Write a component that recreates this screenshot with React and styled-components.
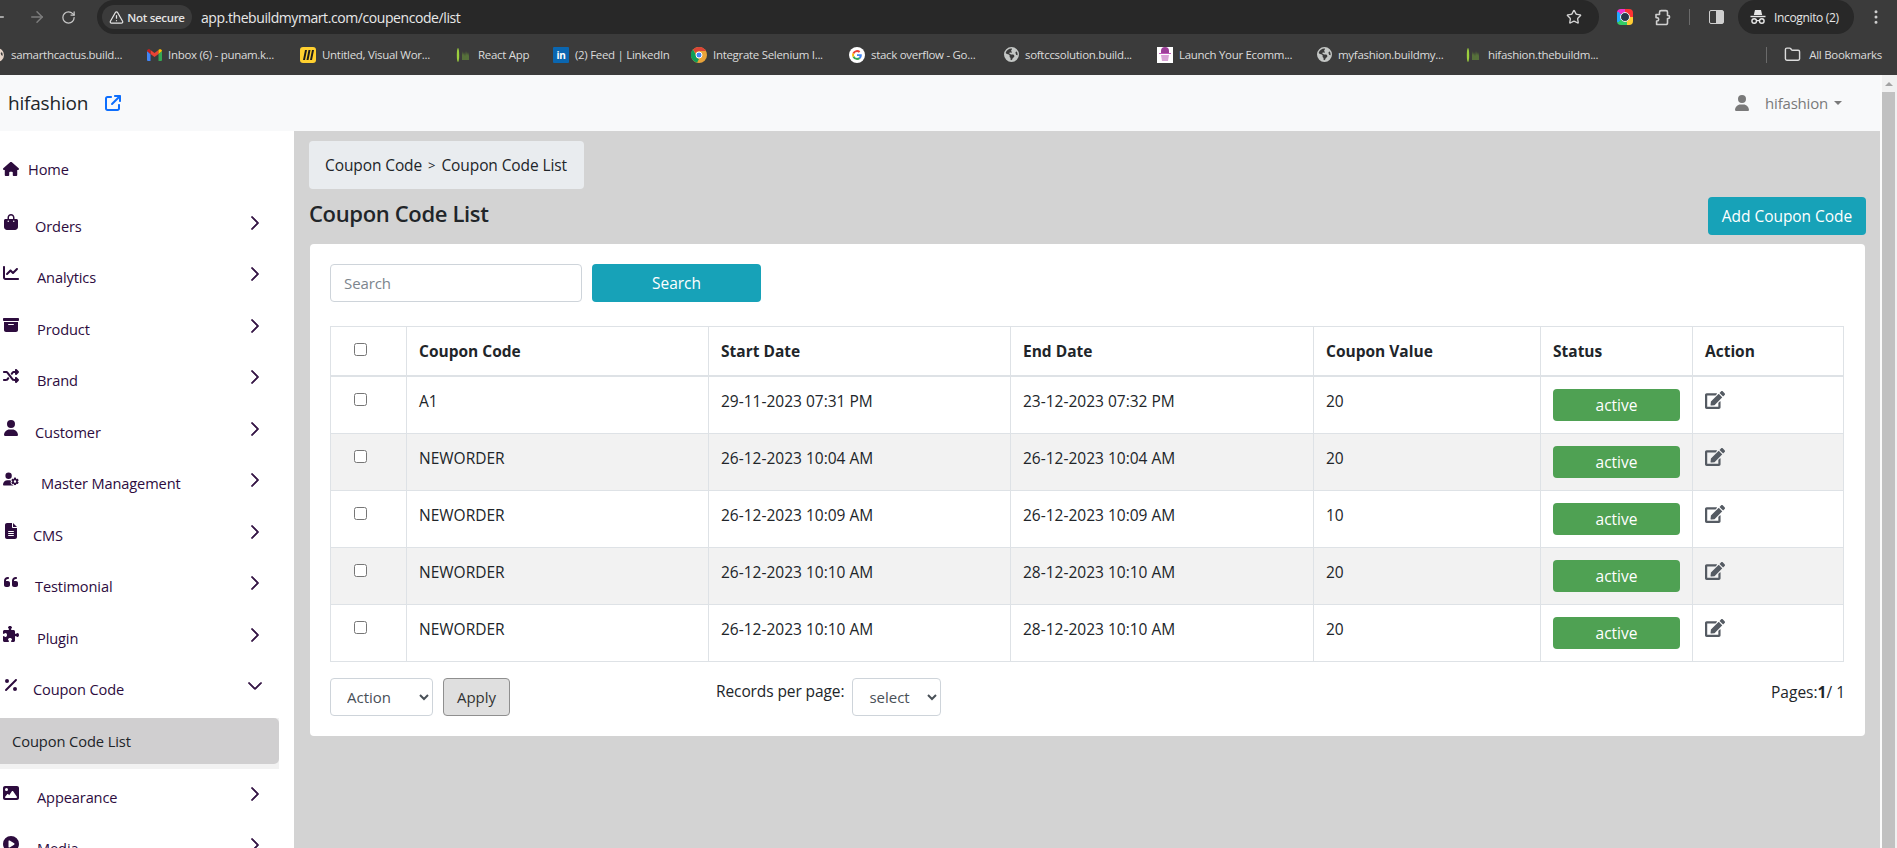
import React from "react";
import styled, { createGlobalStyle } from "styled-components";
import {
  FaHouse, FaBagShopping, FaChartLine, FaBoxArchive, FaShuffle, FaUser, FaUserGear, FaFileLines,
  FaQuoteLeft, FaPuzzlePiece, FaPercent, FaImage, FaCirclePlay, FaEarthAmericas,
  FaArrowUpRightFromSquare,
} from "react-icons/fa6";
import { FaEdit } from "react-icons/fa";
import { BsChevronRight, BsChevronDown } from "react-icons/bs";
import { ArrowLeft, ArrowRight, RotateCw, Star, Folder, EllipsisVertical, TriangleAlert } from "lucide-react";

const FONT = `"Open Sans", "Noto Sans", sans-serif`;

const Global = createGlobalStyle`
  html, body { margin: 0; padding: 0; height: 100%; overflow: hidden; }
  body { font-family: ${FONT}; background: #d3d3d3; }
  * { box-sizing: border-box; }
  svg { flex: none; }
`;

const Page = styled.div`
  width: 1897px; height: 848px; display: flex; flex-direction: column; overflow: hidden;
`;
const TopBar = styled.div`
  height: 34px; background: #3b3b3b; display: flex; align-items: center; color: #c7c7c7; flex: none;
`;
const NavIcons = styled.div`
  width: 97px; flex: none; display: flex; align-items: center; gap: 15px; margin-left: -11px;
`;
const Omnibox = styled.div`
  width: 1502px; margin-left: 11px; height: 34px; background: #282828; border-radius: 17px; display: flex;
  align-items: center; padding-left: 5px; flex: none; position: relative;
`;
const SecureChip = styled.div`
  width: 90px; height: 24px; border-radius: 12px; background: #3b3b3b; display: flex; align-items: center;
  justify-content: center; gap: 3px; font: 600 11.5px ${FONT}; color: #e4e4e4; letter-spacing: -0.3px; flex: none;
`;
const Url = styled.span`
  margin-left: 9px; font: 400 14px ${FONT}; color: #e8e8e8; letter-spacing: -0.42px; white-space: nowrap;
`;
const StarSlot = styled.span`
  margin-left: auto; margin-right: 17px; display: flex; color: #d4d4d4;
`;
const ChromeTools = styled.div`
  flex: 1; display: flex; align-items: center; position: relative; min-width: 0;
`;
const ColorExt = styled.span`
  width: 16px; height: 16px; margin-left: 18px; border-radius: 4px; flex: none; display: block;
  background: conic-gradient(#f33 0 25%, #fc3 25% 45%, #3c6 45% 65%, #2af 65% 85%, #e3c 85%);
  position: relative;
  &::after { content: ""; position: absolute; inset: 3px; border-radius: 50%; background: #27384a; border: 1.5px solid #eee; }
`;
const ToolSlot = styled.span`
  display: flex; margin-left: ${(p) => p.$ml}px; color: #cfcfcf;
`;
const ToolSep = styled.span`
  width: 1px; height: 16px; background: #6a6a6a; margin-left: 18px; flex: none;
`;
const SidePanelIcon = styled.span`
  width: 15px; height: 14px; margin-left: 19px; border: 1.5px solid #cfcfcf; border-radius: 2px; flex: none;
  background: linear-gradient(90deg, transparent 50%, #cfcfcf 50%);
`;
const IncognitoPill = styled.div`
  width: 116px; height: 34px; margin-left: 14px; border-radius: 17px; background: #282828; display: flex;
  align-items: center; gap: 8px; padding-left: 12px; font: 400 12px ${FONT}; letter-spacing: -0.35px; color: #e6e6e6; flex: none;
`;
const DotsSlot = styled.span`
  display: flex; margin-left: 13px; color: #cfcfcf;
`;

const BookmarkBar = styled.div`
  height: 41px; background: #3b3b3b; display: flex; align-items: center; flex: none; color: #dcdcdc; position: relative;
`;
const Bookmark = styled.div`
  width: ${(p) => p.$w}px; margin-left: ${(p) => p.$ml || 0}px; flex: none; display: flex; align-items: center; gap: 6px;
  font: 400 11.5px ${FONT}; letter-spacing: -0.3px; white-space: nowrap; overflow: hidden;
`;
const Fav = styled.span`
  width: 16px; height: 16px; flex: none; display: flex; align-items: center; justify-content: center;
`;
const MiroFav = styled(Fav)`
  background: #ffd02f; border-radius: 3px;
`;
const LinkedInFav = styled(Fav)`
  background: #0a66b0; color: #fff; border-radius: 1px; font: 700 10px ${FONT};
`;
const LaunchFav = styled(Fav)`
  background: #fff; color: #a4489e;
`;
const AllBookmarks = styled.div`
  margin-left: auto; margin-right: 15px; display: flex; align-items: center; gap: 8px;
  font: 400 11.5px ${FONT}; letter-spacing: -0.3px; color: #dcdcdc; white-space: nowrap;
`;
const BarSep = styled.span`
  width: 1px; height: 16px; background: #6a6a6a; margin-right: 9px;
`;

const Body = styled.div`
  flex: 1; display: flex; min-height: 0; position: relative;
`;
const Content = styled.div`
  flex: 1; min-width: 0; display: flex; flex-direction: column;
`;
const Header = styled.header`
  height: 56px; flex: none; background: #f8f9fa; display: flex; align-items: center; padding-left: 8px;
`;
const Brand = styled.span`
  font: 400 19px ${FONT}; color: #212529; letter-spacing: -0.2px;
`;
const BrandLink = styled.span`
  display: flex; color: #0d6efd; margin-left: 17px;
`;
const UserArea = styled.div`
  margin-left: auto; margin-right: 38px; display: flex; align-items: center; color: #7a7a7a; font: 400 15px ${FONT};
`;
const UserName = styled.span`
  margin-left: 15px; letter-spacing: -0.2px;
`;
const Caret = styled.span`
  width: 0; height: 0; margin-left: 6px; border-left: 4px solid transparent; border-right: 4px solid transparent;
  border-top: 4px solid #7a7a7a;
`;

const Columns = styled.div`
  flex: 1; display: flex; min-height: 0;
`;
const Sidebar = styled.aside`
  width: 294px; flex: none; background: #fff; overflow: hidden; padding-top: 12px; color: #2d0c3e;
`;
const NavRow = styled.div`
  height: 51.5px; display: flex; align-items: center; padding-left: 3px; position: relative;
  margin-bottom: ${(p) => p.$mb || 0}px; font: 400 14.6px ${FONT}; letter-spacing: -0.12px; white-space: nowrap;
`;
const NavIcon = styled.span`
  width: 16px; display: flex; transform: translateY(${(p) => p.$up}px); color: #2d0c3e; flex: none;
`;
const NavLabel = styled.span`
  margin-left: ${(p) => p.$ml}px;
`;
const NavChevron = styled.span`
  position: absolute; left: 247px; top: 50%; margin-top: -11px; display: flex; color: #2d0c3e;
`;
const SubBlock = styled.div`
  width: 279px; height: 51px; background: #f2f2f2; padding-bottom: 5px; margin: 3px 0 2px;
`;
const SubItem = styled.div`
  height: 46px; background: #d0cfd0; border-radius: 0 5px 5px 0; padding-left: 12px; display: flex; align-items: center;
  font: 400 14.7px ${FONT}; letter-spacing: -0.1px; color: #212529;
`;

const Main = styled.main`
  flex: 1; min-width: 0; background: #d3d3d3; padding: 10px 15px 0 15px;
`;
const Crumb = styled.div`
  width: 275px; height: 48px; background: #e9ecef; border-radius: 4px; display: flex; align-items: center;
  padding-left: 16px; font: 400 15.5px ${FONT}; letter-spacing: -0.1px; color: #212529; white-space: nowrap;
`;
const CrumbSep = styled.span`
  margin: 0 6px; font-size: 13px;
`;
const TitleRow = styled.div`
  display: flex; align-items: flex-start; justify-content: space-between; margin-top: 8px; height: 47px; margin-right: -1px;
`;
const Title = styled.h1`
  margin: 1px 0 0 0; font: 600 22px ${FONT}; letter-spacing: -0.35px; color: #212529;
`;
const AddButton = styled.button`
  width: 158px; height: 38px; border: none; border-radius: 4px; background: #17a2b8; color: #fff;
  font: 400 15.5px ${FONT}; letter-spacing: -0.05px; padding: 0; white-space: nowrap;
`;
const Card = styled.section`
  margin-left: 1px; height: 492px; background: #fff; border-radius: 4px; padding: 20px 20px 0 20px;
`;
const SearchRow = styled.div`
  display: flex; gap: 10px; height: 39px;
`;
const SearchInput = styled.input`
  width: 252px; height: 38px; border: 1px solid #ced4da; border-radius: 4px; padding: 0 13px;
  font: 400 15px ${FONT}; letter-spacing: -0.1px; color: #495057;
  &::placeholder { color: #7c858d; opacity: 1; }
`;
const SearchButton = styled.button`
  width: 169px; height: 38px; border: none; border-radius: 4px; background: #17a2b8; color: #fff;
  font: 400 15.5px ${FONT}; padding: 0;
`;
const Table = styled.table`
  margin-top: 23px; width: 1513px; border-collapse: collapse; table-layout: fixed; font: 400 15.5px ${FONT};
  color: #212529;
`;
const Th = styled.th`
  height: 49px; border: 1px solid #dee2e6; border-bottom-width: 2px; text-align: left; padding: 0 12px;
  font-weight: 700; font-size: 15.5px; vertical-align: middle;
`;
const Tr = styled.tr`
  background: ${(p) => (p.$alt ? "#f2f2f2" : "#fff")};
`;
const Td = styled.td`
  height: 57px; border: 1px solid #dee2e6; padding: 13px 12px 12px; vertical-align: top; line-height: 22px;
`;
const CheckCell = styled.div`
  display: flex; justify-content: flex-start; height: 20px; align-items: center; margin-left: 11px;
  transform: translateY(${(p) => p.$dy}px);
`;
const CheckBox = styled.input.attrs({ type: "checkbox" })`
  width: 13px; height: 13px; margin: 0;
`;
const StatusPill = styled.div`
  height: 32px; margin-top: -1px; background: #4fa153; border-radius: 4px; color: #fff; display: flex; align-items: center;
  justify-content: center;
`;
const EditIcon = styled.span`
  display: flex; color: #555b63; margin-top: 0;
`;
const Footer = styled.div`
  display: flex; margin-top: 16px; position: relative; height: 40px;
`;
const Select = styled.select`
  width: ${(p) => p.$w}px; height: 38px; border: 1px solid #ced4da; border-radius: 4px; background: #fff; padding-left: 12px;
  font: 400 15px ${FONT}; color: #495057;
`;
const ApplyButton = styled.button`
  width: 67px; height: 38px; margin-left: 10px; background: #dfdfdf; border: 1px solid #8f8f8f; border-radius: 4px;
  font: 400 15px ${FONT}; color: #333; padding: 0;
`;
const Records = styled.div`
  margin-left: 206px; display: flex; align-items: flex-start; gap: 8px; font-size: 15.5px; letter-spacing: -0.1px; color: #212529;
`;
const RecordsLabel = styled.span`
  margin-top: 2px; white-space: nowrap;
`;
const Pages = styled.div`
  margin-left: auto; font-size: 15.5px; color: #212529; padding-top: 3px;
`;

const Scrollbar = styled.div`
  width: 17px; flex: none; background: #f1f1f1; position: relative; border-left: 2px solid #fbfbfb; padding-right: 2px;
`;
const ScrollArrow = styled.div`
  width: 0; height: 0; margin: 7px auto 0; border-left: 4px solid transparent; border-right: 4px solid transparent;
  border-bottom: 4px solid #a3a3a3;
`;
const ScrollThumb = styled.div`
  height: 100%; margin-top: 6px; background: #c1c1c1;
`;

const ReactFav = () => (
  <svg width="16" height="16" viewBox="0 0 16 16">
    <ellipse cx="2" cy="8" rx="1.2" ry="7" fill="#9ccf3e" />
    <path d="M6 4l1 4 1-3 1 4 1-5 1 4 1-3 1 4v4H6z" fill="#56703a" />
  </svg>
);
const GmailFav = () => (
  <svg width="15" height="12" viewBox="0 0 15 12">
    <path d="M0 2v9a1 1 0 0 0 1 1h2.5V5z" fill="#4285f4" />
    <path d="M15 2v9a1 1 0 0 1-1 1h-2.5V5z" fill="#34a853" />
    <path d="M3.5 5v-4L7.5 4l4-3v4l-4 3z" fill="#ea4335" />
    <path d="M0 2c0-1.6 2-2.2 3-1.4L3.5 1v4z" fill="#c5221f" />
    <path d="M15 2c0-1.6-2-2.2-3-1.4l-.5.4v4z" fill="#fbbc04" />
  </svg>
);
const MiroMark = () => (
  <svg width="12" height="12" viewBox="0 0 12 12" fill="#1c1c1c">
    <path d="M1 11L3 1h2L3 11zM4.5 11L6.5 1h2L6.5 11zM8 11L10 1h2L10 11z" />
  </svg>
);
const ChromeFav = () => (
  <svg width="16" height="16" viewBox="0 0 16 16">
    <circle cx="8" cy="8" r="8" fill="#e8a33a" />
    <path d="M8 0a8 8 0 0 1 7 4H8a4 4 0 0 0-3.5 2L2 2.5A8 8 0 0 1 8 0z" fill="#db4437" />
    <path d="M1 12a8 8 0 0 1 1-9.5L5 8a4 4 0 0 0 3 4l-2 3.8A8 8 0 0 1 1 12z" fill="#0f9d58" />
    <circle cx="8" cy="8" r="3" fill="#4285f4" stroke="#fff" />
  </svg>
);
const GoogleFav = () => (
  <svg width="16" height="16" viewBox="0 0 16 16">
    <circle cx="8" cy="8" r="8" fill="#fff" />
    <path d="M12.8 8.2c0-.4 0-.7-.1-1H8v1.9h2.7a2.4 2.4 0 0 1-1 1.5l1.6 1.2c.9-.9 1.5-2.1 1.5-3.6z" fill="#4285f4" />
    <path d="M8 13c1.3 0 2.4-.4 3.3-1.2l-1.6-1.2c-.4.3-1 .5-1.7.5a3 3 0 0 1-2.8-2l-1.6 1.2A5 5 0 0 0 8 13z" fill="#34a853" />
    <path d="M5.2 9.1a3 3 0 0 1 0-2L3.6 5.8a5 5 0 0 0 0 4.5z" fill="#fbbc04" />
    <path d="M8 5c.7 0 1.4.3 1.9.7l1.4-1.4A5 5 0 0 0 3.6 5.8l1.6 1.3A3 3 0 0 1 8 5z" fill="#ea4335" />
  </svg>
);
const LaunchMark = () => (
  <svg width="14" height="15" viewBox="0 0 14 15">
    <path d="M3 4a4 4 0 0 1 8 0v2H3z" fill="#9c3f98" />
    <path d="M1 6h12v1H1z" fill="#c25cbd" />
    <path d="M3 8h8l-1 6H4z" fill="#d9a3d6" />
  </svg>
);
const IncognitoIcon = () => (
  <svg width="16" height="16" viewBox="0 0 16 16" fill="#e6e6e6">
    <path d="M5 1h6l1.2 5H3.8z" />
    <rect x="0.5" y="6.8" width="15" height="1.4" />
    <circle cx="4.2" cy="12" r="2.3" fill="none" stroke="#e6e6e6" strokeWidth="1.4" />
    <circle cx="11.8" cy="12" r="2.3" fill="none" stroke="#e6e6e6" strokeWidth="1.4" />
    <rect x="6.5" y="11" width="3" height="1.2" />
  </svg>
);
const ExtensionIcon = () => (
  <svg width="17" height="17" viewBox="0 0 17 17" fill="none" stroke="currentColor" strokeWidth="1.6" strokeLinejoin="round">
    <path d="M2 5.5h3.5V3.2a1.6 1.6 0 0 1 1.6-1.6h4.9c.8 0 1.5.7 1.5 1.5v3.4h.6a1.4 1.4 0 0 1 0 3h-.6V14a1.5 1.5 0 0 1-1.5 1.5H2.6V12h.4a1.7 1.7 0 0 0 0-3.4h-1z" />
  </svg>
);

const NAV = [
  { label: "Home", Icon: FaHouse, size: 16, ml: 9, up: 0, plain: true, mb: 5.5 },
  { label: "Orders", Icon: FaBagShopping, size: 16, ml: 16, up: -4 },
  { label: "Analytics", Icon: FaChartLine, size: 16, ml: 18, up: -4 },
  { label: "Product", Icon: FaBoxArchive, size: 16, ml: 18, up: -4 },
  { label: "Brand", Icon: FaShuffle, size: 16, ml: 18, up: -4 },
  { label: "Customer", Icon: FaUser, size: 16, ml: 16, up: -4 },
  { label: "Master Management", Icon: FaUserGear, size: 16, ml: 22, up: -4 },
  { label: "CMS", Icon: FaFileLines, size: 16, ml: 14, up: -4 },
  { label: "Testimonial", Icon: FaQuoteLeft, size: 16, ml: 16, up: -4 },
  { label: "Plugin", Icon: FaPuzzlePiece, size: 16, ml: 18, up: -4 },
  { label: "Coupon Code", Icon: FaPercent, size: 16, ml: 14, up: -4, open: true },
  { label: "Appearance", Icon: FaImage, size: 16, ml: 18, up: -4 },
  { label: "Media", Icon: FaCirclePlay, size: 16, ml: 18, up: -4 },
];

const ROWS = [
  ["A1", "29-11-2023 07:31 PM", "23-12-2023 07:32 PM", "20"],
  ["NEWORDER", "26-12-2023 10:04 AM", "26-12-2023 10:04 AM", "20"],
  ["NEWORDER", "26-12-2023 10:09 AM", "26-12-2023 10:09 AM", "10"],
  ["NEWORDER", "26-12-2023 10:10 AM", "28-12-2023 10:10 AM", "20"],
  ["NEWORDER", "26-12-2023 10:10 AM", "28-12-2023 10:10 AM", "20"],
];

const Globe = () => <FaEarthAmericas size={15} color="#c4c7c5" />;

export default function App() {
  return (
    <Page>
      <Global />
      <TopBar>
        <NavIcons>
          <ArrowLeft size={18} />
          <ArrowRight size={18} color="#7d7d7d" style={{ marginLeft: 6 }} />
          <RotateCw size={15} />
        </NavIcons>
        <Omnibox>
          <SecureChip>
            <TriangleAlert size={15} />
            Not secure
          </SecureChip>
          <Url>app.thebuildmymart.com/coupencode/list</Url>
          <StarSlot><Star size={16} strokeWidth={2} /></StarSlot>
        </Omnibox>
        <ChromeTools>
          <ColorExt />
          <ToolSlot $ml={21}><ExtensionIcon /></ToolSlot>
          <ToolSep />
          <SidePanelIcon />
          <IncognitoPill><IncognitoIcon />Incognito (2)</IncognitoPill>
          <DotsSlot><EllipsisVertical size={18} /></DotsSlot>
        </ChromeTools>
      </TopBar>
      <BookmarkBar>
        <Bookmark $w={143} $ml={-11}><Fav><FaEarthAmericas size={14} color="#e6d4c8" /></Fav>samarthcactus.build...</Bookmark>
        <Bookmark $w={154} $ml={14}><Fav><GmailFav /></Fav>Inbox (6) - punam.k...</Bookmark>
        <Bookmark $w={156}><MiroFav><MiroMark /></MiroFav>Untitled, Visual Wor...</Bookmark>
        <Bookmark $w={97}><Fav><ReactFav /></Fav>React App</Bookmark>
        <Bookmark $w={138}><LinkedInFav>in</LinkedInFav>(2) Feed | LinkedIn</Bookmark>
        <Bookmark $w={158}><Fav><ChromeFav /></Fav>Integrate Selenium I...</Bookmark>
        <Bookmark $w={154}><Fav><GoogleFav /></Fav>stack overflow - Go...</Bookmark>
        <Bookmark $w={154}><Fav><Globe /></Fav>softccsolution.build...</Bookmark>
        <Bookmark $w={159}><LaunchFav><LaunchMark /></LaunchFav>Launch Your Ecomm...</Bookmark>
        <Bookmark $w={150}><Fav><Globe /></Fav>myfashion.buildmy...</Bookmark>
        <Bookmark $w={150}><Fav><ReactFav /></Fav>hifashion.thebuildm...</Bookmark>
        <AllBookmarks>
          <BarSep />
          <Folder size={17} />
          All Bookmarks
        </AllBookmarks>
      </BookmarkBar>
      <Body>
        <Content>
          <Header>
            <Brand>hifashion</Brand>
            <BrandLink><FaArrowUpRightFromSquare size={16} /></BrandLink>
            <UserArea>
              <FaUser size={16} />
              <UserName>hifashion</UserName>
              <Caret />
            </UserArea>
          </Header>
          <Columns>
            <Sidebar>
              {NAV.map(({ label, Icon, size, ml, up, plain, open, mb }) => (
                <React.Fragment key={label}>
                  <NavRow $mb={mb}>
                    <NavIcon $up={up}><Icon size={size} /></NavIcon>
                    <NavLabel $ml={ml}>{label}</NavLabel>
                    {!plain && (
                      <NavChevron>
                        {open ? <BsChevronDown size={16} strokeWidth={1} /> : <BsChevronRight size={16} strokeWidth={1} />}
                      </NavChevron>
                    )}
                  </NavRow>
                  {open && (
                    <SubBlock>
                      <SubItem>Coupon Code List</SubItem>
                    </SubBlock>
                  )}
                </React.Fragment>
              ))}
            </Sidebar>
            <Main>
              <Crumb>Coupon Code<CrumbSep>&gt;</CrumbSep>Coupon Code List</Crumb>
              <TitleRow>
                <Title>Coupon Code List</Title>
                <AddButton>Add Coupon Code</AddButton>
              </TitleRow>
              <Card>
                <SearchRow>
                  <SearchInput placeholder="Search" />
                  <SearchButton>Search</SearchButton>
                </SearchRow>
                <Table>
                  <colgroup>
                    <col width="76" /><col width="302" /><col width="302" /><col width="303" />
                    <col width="227" /><col width="152" /><col width="151" />
                  </colgroup>
                  <thead>
                    <tr>
                      <Th><CheckCell $dy={-1}><CheckBox /></CheckCell></Th>
                      <Th>Coupon Code</Th>
                      <Th>Start Date</Th>
                      <Th>End Date</Th>
                      <Th>Coupon Value</Th>
                      <Th>Status</Th>
                      <Th>Action</Th>
                    </tr>
                  </thead>
                  <tbody>
                    {ROWS.map((r, i) => (
                      <Tr key={i} $alt={i % 2 === 1}>
                        <Td><CheckCell $dy={0}><CheckBox /></CheckCell></Td>
                        <Td>{r[0]}</Td>
                        <Td>{r[1]}</Td>
                        <Td>{r[2]}</Td>
                        <Td>{r[3]}</Td>
                        <Td><StatusPill>active</StatusPill></Td>
                        <Td><EditIcon><FaEdit size={20} /></EditIcon></Td>
                      </Tr>
                    ))}
                  </tbody>
                </Table>
                <Footer>
                  <Select $w={103}><option>Action</option></Select>
                  <ApplyButton>Apply</ApplyButton>
                  <Records>
                    <RecordsLabel>Records per page:</RecordsLabel>
                    <Select $w={89}><option>select</option></Select>
                  </Records>
                  <Pages>Pages:<b>1</b>/ 1</Pages>
                </Footer>
              </Card>
            </Main>
          </Columns>
        </Content>
        <Scrollbar>
          <ScrollArrow />
          <ScrollThumb />
        </Scrollbar>
      </Body>
    </Page>
  );
}
